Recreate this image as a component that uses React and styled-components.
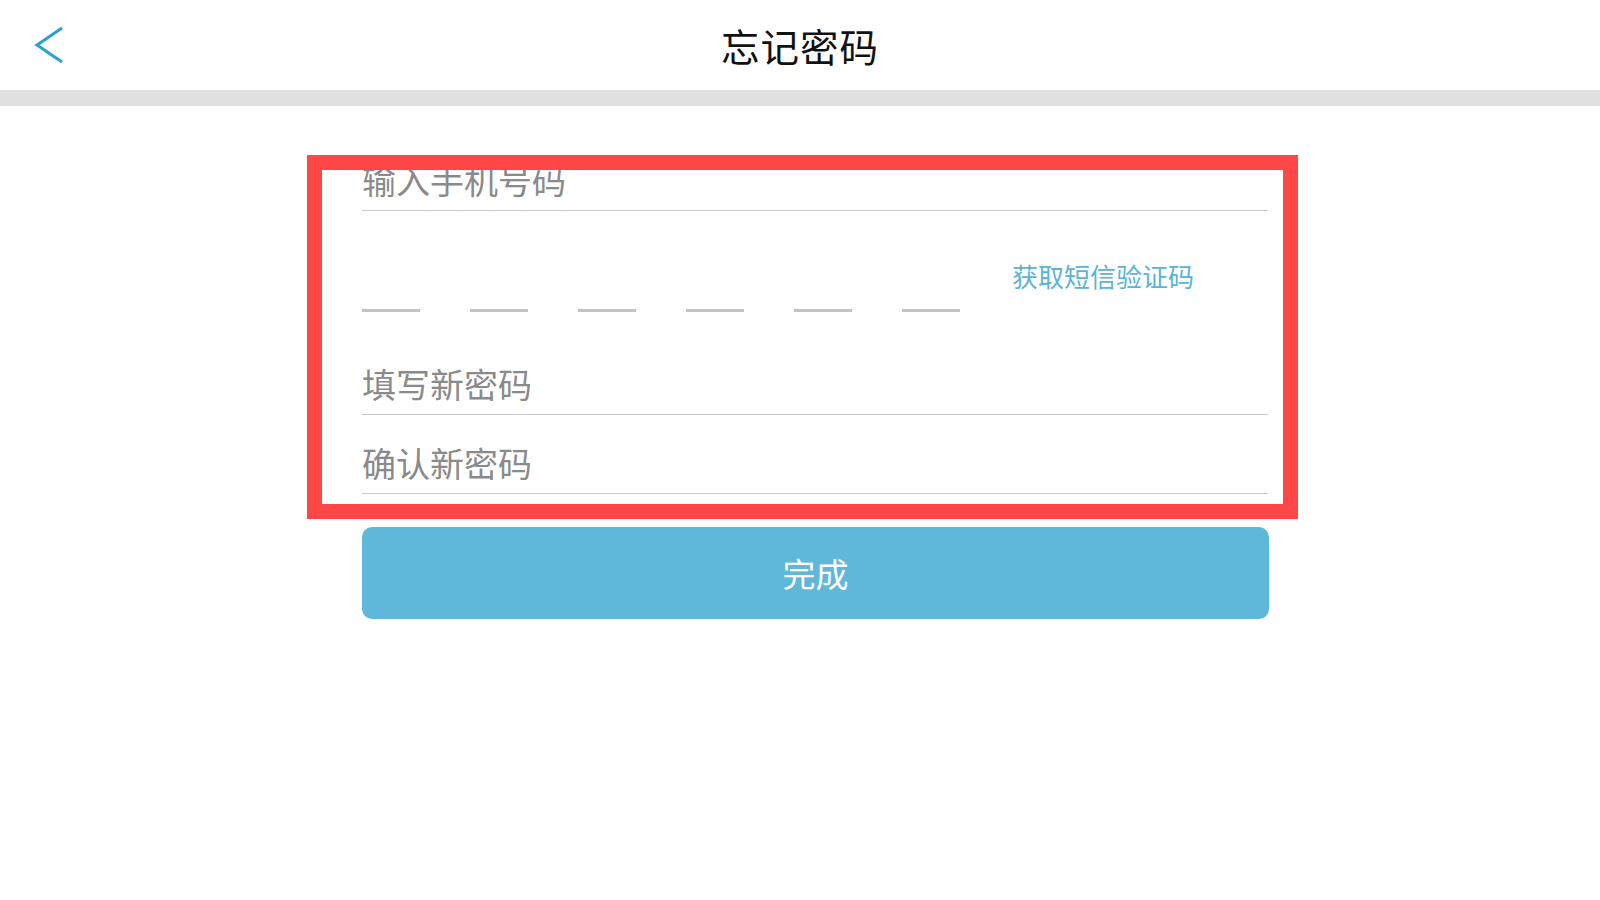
import styled, { createGlobalStyle } from 'styled-components'

const GlobalStyle = createGlobalStyle`
  html, body {
    margin: 0;
    padding: 0;
    background: #ffffff;
    font-family: "Noto Sans CJK SC", "Liberation Sans", sans-serif;
  }
`;

const Page = styled.div`
  position: relative;
  width: 1600px;
  height: 900px;
  background: #fff;
  display: flex;
  flex-direction: column;
`;

const Header = styled.div`
  height: 90px;
  display: flex;
  align-items: center;
  justify-content: center;
  position: relative;
  background: #fff;
`;

const BackButton = styled.div`
  position: absolute;
  left: 33px;
  top: 25px;
  width: 34px;
  height: 40px;
  cursor: pointer;
`;

const Title = styled.div`
  font-size: 38.5px;
  color: #111;
  letter-spacing: 1px;
  line-height: 1;
  margin-top: 1px;
`;

const Divider = styled.div`
  height: 16px;
  background: #e0e0e0;
`;

const Form = styled.div`
  width: 906px;
  margin: 26px 0 0 362px;
  display: flex;
  flex-direction: column;
`;

const InputRow = styled.div`
  border-bottom: 1px solid #c9c9c9;
  display: flex;
  align-items: flex-end;
  padding-bottom: 10px;
  height: 68px;
`;

const Placeholder = styled.span`
  font-size: 34px;
  line-height: 40px;
  color: #8a8a8a;
`;

const CodeRow = styled.div`
  height: 125px;
  display: flex;
  align-items: flex-start;
  padding-top: 49px;
  box-sizing: border-box;
`;

const Dashes = styled.div`
  display: flex;
  gap: 50px;
  margin-top: 49px;
`;

const Dash = styled.div`
  width: 58px;
  height: 3px;
  background: #c4c4c4;
`;

const SmsLink = styled.span`
  margin-left: 52px;
  font-size: 26px;
  line-height: 32px;
  color: #5ab4d6;
  cursor: pointer;
`;

const SubmitButton = styled.button`
  margin-top: 33px;
  height: 92px;
  width: 907px;
  border: none;
  border-radius: 10px;
  background: #5fb7da;
  color: #fff;
  font-family: inherit;
  font-size: 33px;
  padding: 0;
`;

const Highlight = styled.div`
  position: absolute;
  left: 307px;
  top: 155px;
  width: 991px;
  height: 364px;
  box-sizing: border-box;
  border: 15px solid #ff4747;
  pointer-events: none;
`;

function App() {
  const fields = ['填写新密码', '确认新密码'];
  return (
    <Page>
      <GlobalStyle />
      <Header>
        <BackButton>
          <svg width="34" height="40" viewBox="0 0 34 40">
            <path d="M29 3 L4 20 L29 37" fill="none" stroke="#2ba0d2" strokeWidth="3" />
          </svg>
        </BackButton>
        <Title>忘记密码</Title>
      </Header>
      <Divider />
      <Form>
        <InputRow>
          <Placeholder>输入手机号码</Placeholder>
        </InputRow>
        <CodeRow>
          <Dashes>
            {[0, 1, 2, 3, 4, 5].map((i) => <Dash key={i} />)}
          </Dashes>
          <SmsLink>获取短信验证码</SmsLink>
        </CodeRow>
        {fields.map((f) => (
          <InputRow key={f}>
            <Placeholder>{f}</Placeholder>
          </InputRow>
        ))}
        <SubmitButton>完成</SubmitButton>
      </Form>
      <Highlight />
    </Page>
  );
}

export default App;
